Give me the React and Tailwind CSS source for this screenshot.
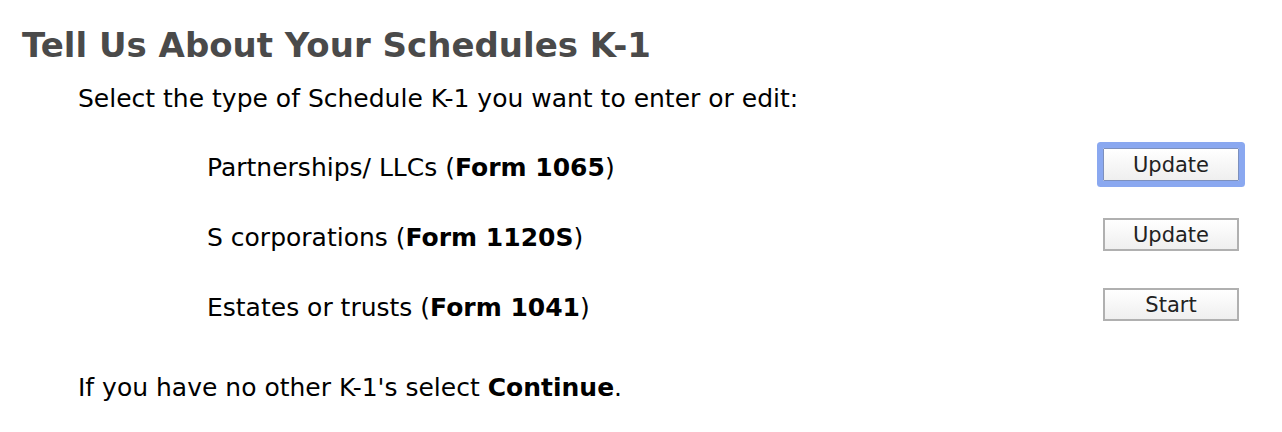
import React from 'react';

const rows = [
  { label: 'Partnerships/ LLCs', form: 'Form 1065', action: 'Update', focused: true },
  { label: 'S corporations', form: 'Form 1120S', action: 'Update' },
  { label: 'Estates or trusts', form: 'Form 1041', action: 'Start' },
];

export default function App() {
  return (
    <div className="w-[1282px] h-[432px] bg-white pt-[25px] pl-[22px] pr-[43px] font-['DejaVu_Sans',sans-serif] text-black">
      <h1 className="text-[34px] leading-[40px] font-bold text-[#4a4a4a]">Tell Us About Your Schedules K-1</h1>
      <div className="pl-[56px] mt-[19px]">
        <p className="text-[25px] leading-[30px]">Select the type of Schedule K-1 you want to enter or edit:</p>
        <div className="mt-[34px] flex flex-col gap-[37px]">
          {rows.map((r) => (
            <div key={r.label} className="flex items-start justify-between pl-[129px] h-[33px]">
              <span className="text-[25px] leading-[30px] mt-[5px]">
                {r.label} (<b>{r.form}</b>)
              </span>
              <button
                className={
                  r.focused
                    ? 'w-[136px] h-[33px] pt-[2px] border border-[#7d90bd] bg-gradient-to-b from-[#ffffff] to-[#efefef] text-[21px] leading-none text-[#222] shadow-[0_0_0_6px_#8aa8f0] rounded-[1px]'
                    : 'w-[136px] h-[33px] pt-[2px] border-2 border-[#b0b0b0] bg-gradient-to-b from-[#ffffff] to-[#efefef] text-[21px] leading-none text-[#222]'
                }
              >
                {r.action}
              </button>
            </div>
          ))}
        </div>
        <p className="text-[25px] leading-[30px] mt-[52px]">
          If you have no other K-1's select <b>Continue</b>.
        </p>
      </div>
    </div>
  );
}
